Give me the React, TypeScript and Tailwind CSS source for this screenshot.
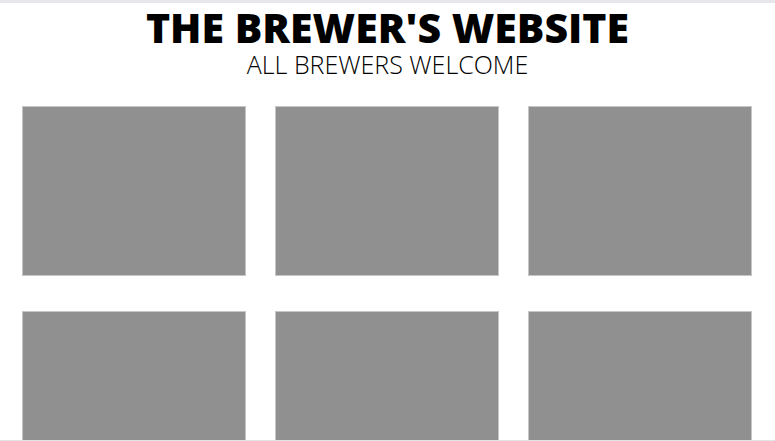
const tiles = [1, 2, 3, 4, 5, 6];

export default function App() {
  return (
    <div
      className="relative min-h-[441px] overflow-hidden border-t-[3px] border-[#e7e7eb] bg-white text-black"
      style={{ fontFamily: '"Open Sans", "Liberation Sans", sans-serif' }}
    >
      <header className="flex flex-col items-center">
        <h1 className="mt-[2px] text-[41px] leading-[44px] font-extrabold">THE BREWER'S WEBSITE</h1>
        <p className="mt-[2px] text-[25px] leading-[26px] font-light">ALL BREWERS WELCOME</p>
      </header>

      <div className="mt-[29px] ml-[22px] grid grid-cols-[224px_224px_224px] gap-x-[29px] gap-y-[35px]">
        {tiles.map((t) => (
          <div key={t} className="h-[170px] border border-[#c6c6c6] bg-[#909090]" />
        ))}
      </div>

      <div className="fixed inset-x-0 bottom-0 h-px bg-[#e3e3e3]" />
    </div>
  );
}
